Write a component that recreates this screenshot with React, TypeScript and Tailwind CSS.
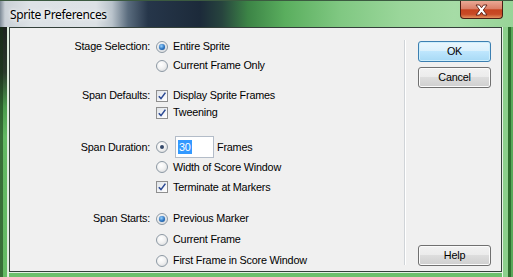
import React from "react";

function Radio({ checked, small }: { checked?: boolean; small?: boolean }) {
  return (
    <span className="w-[12px] h-[12px] shrink-0 rounded-full border border-[#8d99a4] bg-[radial-gradient(circle_at_40%_35%,#ffffff_0%,#f2f2f2_45%,#d2d5d8_100%)] flex items-center justify-center">
      {checked && !small && (
        <span className="w-[6px] h-[6px] rounded-full bg-[radial-gradient(circle_at_40%_35%,#9ad4ff_0%,#2a72c0_55%,#14457f_100%)] shadow-[0_0_1px_#1a4f8a]" />
      )}
      {checked && small && <span className="w-[4px] h-[4px] rounded-full bg-[#34496a]" />}
    </span>
  );
}

function Check() {
  return (
    <span className="w-[12px] h-[12px] shrink-0 border border-[#8f8f8f] bg-[linear-gradient(135deg,#dfe3e8_0%,#f4f5f7_60%,#ffffff_100%)] flex items-center justify-center">
      <svg width="10" height="10" viewBox="0 0 10 10">
        <path d="M1.8 5.2 L4 7.6 L8.4 1.6" fill="none" stroke="#2c4a94" strokeWidth="1.6" />
      </svg>
    </span>
  );
}

function Option({
  h,
  control,
  children,
}: {
  h: string;
  control: React.ReactNode;
  children: React.ReactNode;
}) {
  return (
    <div className={`${h} flex items-center gap-[5px]`}>
      {control}
      {children}
    </div>
  );
}

function Btn({ children, primary }: { children: React.ReactNode; primary?: boolean }) {
  return (
    <div
      className={
        primary
          ? "w-[73px] h-[21px] rounded-[3px] border border-[#3c7fb1] bg-[linear-gradient(180deg,#eaf6fd_0%,#d9f0fc_50%,#bee6fd_50%,#a7d9f5_100%)] shadow-[inset_0_0_0_1px_#cdeefc] flex items-center justify-center text-black"
          : "w-[73px] h-[21px] rounded-[3px] border border-[#707070] bg-[linear-gradient(180deg,#f2f2f2_0%,#ebebeb_50%,#dddddd_50%,#cfcfcf_100%)] shadow-[inset_0_0_0_1px_#fbfbfb] flex items-center justify-center text-black"
      }
    >
      {children}
    </div>
  );
}

export default function App() {
  return (
    <div className="w-[513px] h-[277px] overflow-hidden flex flex-col bg-[#74c274]">
      {/* title bar */}
      <div className="h-[27px] shrink-0 flex border-t border-[#3b5a40] bg-[linear-gradient(90deg,#7d8a96_0px,#c9d0d6_5px,#dde2e6_30px,#dce1e5_96px,#b9c3cb_112px,#5a6c7e_128px,#26364a_148px,#1c2a3a_200px,#27443e_222px,#3c8446_248px,#5aae5e_285px,#80c882_340px,#9ad69a_400px,#a6dca6_455px,#98d498_513px)]">
        <div
          className="pl-[10px] pt-[6px] text-[12px] leading-[16px] tracking-[-0.35px] text-black [text-shadow:0_0_6px_#ffffff,0_0_3px_#ffffff]"
          style={{ fontFamily: '"Noto Sans", "Open Sans", sans-serif' }}
        >
          Sprite Preferences
        </div>
        <div className="ml-auto mr-[10px] w-[43px] h-[18px] rounded-b-[4px] border border-t-0 border-[#4a1d14] bg-[linear-gradient(180deg,#eaa895_0%,#db8068_45%,#c6431f_52%,#c84a26_78%,#e2915e_100%)] flex items-center justify-center">
          <svg width="15" height="12" viewBox="0 0 15 12">
            <path
              d="M2 1 H5.5 L7.5 3.8 L9.5 1 H13 L9.3 6 L13 11 H9.5 L7.5 8.2 L5.5 11 H2 L5.7 6 Z"
              fill="#ffffff"
              stroke="#5a1e12"
              strokeWidth="0.9"
            />
          </svg>
        </div>
      </div>

      {/* body */}
      <div className="flex flex-1">
        <div className="w-[9px] shrink-0 bg-[linear-gradient(90deg,rgba(20,50,20,0.55)_0px,rgba(20,50,20,0.55)_3px,transparent_3px,transparent_7px,#d6ead6_7px,#e6f2e6_9px),linear-gradient(180deg,#1c221e_0px,#2a3a2c_45px,#4a9a4c_80px,#62b862_110px,#64ba64_250px)]" />
        <div className="w-[493px] flex flex-col">
          <div
            className="h-[245px] border border-[#34403a] bg-[#f0f0f0] flex text-[10.8px] tracking-[-0.2px] text-black"
            style={{ fontFamily: '"Liberation Sans", Arial, sans-serif' }}
          >
            {/* form */}
            <div className="w-[394px] pt-[9px] flex flex-col">
              <div className="flex gap-[6px] mb-[12px]">
                <div className="w-[140px] h-[19px] flex items-center justify-end">Stage Selection:</div>
                <div className="flex flex-col">
                  <Option h="h-[19px]" control={<Radio checked />}>Entire Sprite</Option>
                  <Option h="h-[19px]" control={<Radio />}>Current Frame Only</Option>
                </div>
              </div>
              <div className="flex gap-[6px] mb-[16px]">
                <div className="w-[140px] h-[17px] flex items-center justify-end">Span Defaults:</div>
                <div className="flex flex-col">
                  <Option h="h-[17px]" control={<Check />}>Display Sprite Frames</Option>
                  <Option h="h-[17px]" control={<Check />}>Tweening</Option>
                </div>
              </div>
              <div className="flex gap-[6px] mb-[11px]">
                <div className="w-[140px] h-[20px] flex items-center justify-end">Span Duration:</div>
                <div className="flex flex-col">
                  <div className="h-[20px] flex items-center">
                    <Radio checked small />
                    <div className="ml-[7px] w-[39px] h-[22px] shrink-0 border border-[#b3bcc8] bg-white flex items-center pl-[2px]">
                      <span className="bg-[#3399ff] text-white h-[14px] leading-[14px] px-[1px]">30</span>
                    </div>
                    <span className="ml-[3px]">Frames</span>
                  </div>
                  <Option h="h-[20px]" control={<Radio />}>Width of Score Window</Option>
                  <Option h="h-[20px]" control={<Check />}>Terminate at Markers</Option>
                </div>
              </div>
              <div className="flex gap-[6px]">
                <div className="w-[140px] h-[21px] flex items-center justify-end">Span Starts:</div>
                <div className="flex flex-col">
                  <Option h="h-[21px]" control={<Radio checked />}>Previous Marker</Option>
                  <Option h="h-[21px]" control={<Radio />}>Current Frame</Option>
                  <Option h="h-[21px]" control={<Radio />}>First Frame in Score Window</Option>
                </div>
              </div>
            </div>
            {/* separator */}
            <div className="w-[1px] mt-[12px] h-[225px] bg-[#d0d4d8] shadow-[1px_0_0_#ffffff]" />
            {/* buttons */}
            <div className="ml-[13px] pt-[13px] flex flex-col">
              <Btn primary>OK</Btn>
              <div className="mt-[5px]">
                <Btn>Cancel</Btn>
              </div>
              <div className="mt-[157px]">
                <Btn>Help</Btn>
              </div>
            </div>
          </div>
          <div className="flex-1 border-t border-[#e2f0e2] bg-[#6cc06c]" />
        </div>
        <div className="flex-1 bg-[linear-gradient(90deg,#e6f2e6_0px,#e6f2e6_1px,#8cd08c_1px,#8cd08c_6px,#2f6f30_6px,#2f6f30_9px,#5aa85a_9px)]" />
      </div>
    </div>
  );
}
